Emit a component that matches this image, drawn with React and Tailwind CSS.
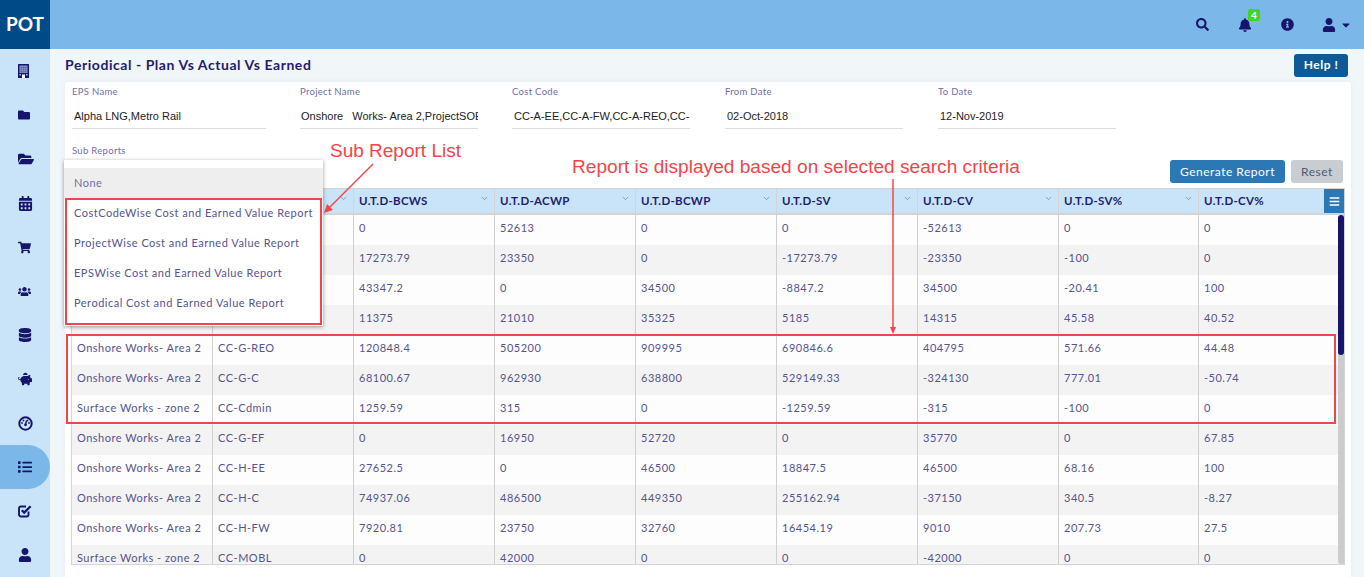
import React from "react";
import {
  FaFolder, FaFolderOpen, FaCalendarAlt, FaShoppingCart, FaUsers, FaDatabase,
  FaPiggyBank, FaList, FaUser, FaSearch, FaBell, FaInfoCircle, FaCaretDown, FaBars,
} from "react-icons/fa";
import { ChevronDown } from "lucide-react";

const BuildingIcon = () => (
  <svg width="11" height="14" viewBox="0 0 11 14">
    <rect width="11" height="14" rx="0.5" fill="#17156b" />
    <rect x="1.5" y="1.5" width="8" height="7.5" fill="#8a9ac8" />
    <path d="M3.5 1.5V9M5.5 1.5V9M7.5 1.5V9M1.5 3.5H9.5M1.5 5.5H9.5M1.5 7.5H9.5" stroke="#55649f" strokeWidth="0.6" />
    <rect x="4" y="10.5" width="3" height="3.5" fill="#ffffff" />
    <rect x="1.5" y="10" width="1.5" height="1.5" fill="#a9c6e8" />
    <rect x="8" y="10" width="1.5" height="1.5" fill="#a9c6e8" />
  </svg>
);

const GaugeIcon = () => (
  <svg width="15" height="15" viewBox="0 0 15 15" fill="none">
    <circle cx="7.5" cy="7.5" r="6.2" stroke="#17156b" strokeWidth="2" />
    <circle cx="4" cy="7" r="0.9" fill="#17156b" />
    <circle cx="5.5" cy="4.5" r="0.9" fill="#17156b" />
    <circle cx="9.5" cy="4.5" r="0.9" fill="#17156b" />
    <circle cx="11" cy="7" r="0.9" fill="#17156b" />
    <path d="M7.5 8.5L8.5 4.5" stroke="#17156b" strokeWidth="1.4" />
    <circle cx="7.5" cy="8.8" r="1.4" fill="#17156b" />
  </svg>
);

const CheckIcon = () => (
  <svg width="14" height="14" viewBox="0 0 14 14" fill="none">
    <path d="M10.5 7.5V10.5C10.5 11.6 9.8 12.5 8.5 12.5H3C1.9 12.5 1 11.6 1 10.5V4.5C1 3.4 1.9 2.5 3 2.5H8" stroke="#17156b" strokeWidth="1.9" />
    <path d="M3.8 6.2L6.2 8.6L12.6 2.2" stroke="#17156b" strokeWidth="2.3" />
  </svg>
);

const NAV = [
  <BuildingIcon />,
  <FaFolder className="w-auto h-[12px]" />,
  <FaFolderOpen className="w-auto h-[16px]" />,
  <FaCalendarAlt className="w-auto h-[15px]" />,
  <FaShoppingCart className="w-auto h-[13px]" />,
  <FaUsers className="w-auto h-[13px]" />,
  <FaDatabase className="w-auto h-[14px]" />,
  <FaPiggyBank className="w-auto h-[14px]" />,
  <GaugeIcon />,
  <FaList className="w-auto h-[14px]" />,
  <CheckIcon />,
  <FaUser className="w-auto h-[14px]" />,
];
const ACTIVE_NAV = 9;

const FIELDS = [
  { label: "EPS Name", value: "Alpha LNG,Metro Rail", box: "w-[194px]", indent: "pl-[2px]" },
  { label: "Project Name", value: <>Onshore  <span className="ml-[3px]">Works- Area 2,ProjectSOE</span></>, box: "w-[178px]", indent: "pl-[1px]" },
  { label: "Cost Code", value: "CC-A-EE,CC-A-FW,CC-A-REO,CC-", box: "w-[178px]", indent: "pl-[2px]" },
  { label: "From Date", value: "02-Oct-2018", box: "w-[178px] ml-[1px]", indent: "pl-[2px]" },
  { label: "To Date", value: "12-Nov-2019", box: "w-[178px] ml-[1px]", indent: "pl-[2px]" },
];

const COLUMNS = ["", "", "U.T.D-BCWS", "U.T.D-ACWP", "U.T.D-BCWP", "U.T.D-SV", "U.T.D-CV", "U.T.D-SV%", "U.T.D-CV%"];

// first two cells of the top rows sit behind the open dropdown
const ROWS = [
  ["", "", "0", "52613", "0", "0", "-52613", "0", "0"],
  ["", "", "17273.79", "23350", "0", "-17273.79", "-23350", "-100", "0"],
  ["", "", "43347.2", "0", "34500", "-8847.2", "34500", "-20.41", "100"],
  ["", "", "11375", "21010", "35325", "5185", "14315", "45.58", "40.52"],
  ["Onshore Works- Area 2", "CC-G-REO", "120848.4", "505200", "909995", "690846.6", "404795", "571.66", "44.48"],
  ["Onshore Works- Area 2", "CC-G-C", "68100.67", "962930", "638800", "529149.33", "-324130", "777.01", "-50.74"],
  ["Surface Works - zone 2", "CC-Cdmin", "1259.59", "315", "0", "-1259.59", "-315", "-100", "0"],
  ["Onshore Works- Area 2", "CC-G-EF", "0", "16950", "52720", "0", "35770", "0", "67.85"],
  ["Onshore Works- Area 2", "CC-H-EE", "27652.5", "0", "46500", "18847.5", "46500", "68.16", "100"],
  ["Onshore Works- Area 2", "CC-H-C", "74937.06", "486500", "449350", "255162.94", "-37150", "340.5", "-8.27"],
  ["Onshore Works- Area 2", "CC-H-FW", "7920.81", "23750", "32760", "16454.19", "9010", "207.73", "27.5"],
  ["Surface Works - zone 2", "CC-MOBL", "0", "42000", "0", "0", "-42000", "0", "0"],
];

const SUB_REPORTS = [
  "CostCodeWise Cost and Earned Value Report",
  "ProjectWise Cost and Earned Value Report",
  "EPSWise Cost and Earned Value Report",
  "Perodical Cost and Earned Value Report",
];

const GRID = "grid grid-cols-[141px_141px_141px_141px_141px_141px_141px_140px_1fr]";

const Sidebar = () => (
  <aside className="w-[50px] shrink-0 bg-[#c9e4f9] flex flex-col">
    {NAV.map((icon, i) => (
      <div key={i} className={`h-[44px] pl-[18px] flex items-center text-[#17156b] ${i === ACTIVE_NAV ? "bg-[#7bb7e8] rounded-r-[22px]" : ""}`}>
        {icon}
      </div>
    ))}
  </aside>
);

const Header = () => (
  <header className="h-[49px] bg-[#7bb7e8] flex items-center shrink-0">
    <div className="w-[50px] h-full bg-[#004b87] flex items-center justify-center text-white font-bold text-[19px]">POT</div>
    <div className="flex-1" />
    <div className="flex items-center text-[#17156b]">
      <FaSearch size={13} className="mr-[29px]" />
      <div className="relative mr-[29px]">
        <FaBell size={14} />
        <span className="absolute -top-[9px] left-[10px] w-[12px] h-[12px] rounded-[2px] bg-[#3fd81e] text-white text-[10px] font-bold leading-[12px] text-center">4</span>
      </div>
      <FaInfoCircle size={13} className="mr-[28px]" />
      <FaUser size={14} className="mr-[4px]" />
      <FaCaretDown size={12} className="mr-[12px]" />
    </div>
  </header>
);

const Field = ({ label, value, box, indent }) => (
  <div className={box}>
    <div className="text-[9.5px] leading-[12px] tracking-[0.3px] text-[#6f6ea8]">{label}</div>
    <div className={`mt-[6px] h-[25px] border-b border-[#dddddd] text-[11px] leading-[24px] text-[#222222] whitespace-pre overflow-hidden font-['Liberation_Sans',sans-serif] ${indent}`}>{value}</div>
  </div>
);

const ReportTable = () => (
  <div className="relative mx-[6px] h-[377px] border-x border-b border-t border-[#d4d4d4] overflow-hidden">
    <div className={`${GRID} h-[26px] bg-[#c9e4f9] border-b-[2px] border-[#d4d4d4]`}>
      {COLUMNS.map((col, i) => (
        <div key={i} className="relative border-r border-[#d4d4d4] pl-[5px] text-[11.5px] font-bold tracking-[0.3px] leading-[24px] text-[#1f1d6e]">
          {col}
          <ChevronDown size={9} strokeWidth={1.6} className="absolute right-[5px] top-[5px] text-[#5b6b9a]" />
        </div>
      ))}
    </div>
    <div className="absolute top-0 right-0 w-[20px] h-[24px] bg-[#2b78b5] flex items-center justify-center text-white">
      <FaBars size={11} />
    </div>
    {ROWS.map((row, r) => (
      <div key={r} className={`${GRID} h-[30px] ${r % 2 ? "bg-[#f3f3f3]" : "bg-[#fdfdfd]"}`}>
        {row.map((cell, c) => (
          <div key={c} className="border-r border-[#cfcfcf] pl-[5px] text-[11px] tracking-[0.5px] leading-[26px] text-[#55548f] whitespace-nowrap">{cell}</div>
        ))}
      </div>
    ))}
    <div className="absolute right-0 top-[26px] bottom-0 w-[6px] bg-[#cccccc] rounded-[3px]">
      <div className="h-[140px] bg-[#17156b] rounded-[3px]" />
    </div>
  </div>
);

const Annotations = () => (
  <>
    <div className="absolute left-[64px] top-[160px] w-[259px] h-[166px] bg-white shadow-[0_1px_4px_rgba(0,0,0,0.4)] pt-[8px] z-10">
      <div className="h-[30px] bg-[#eeeeee] pl-[10px] text-[11px] tracking-[0.5px] leading-[30px] text-[#6f6ea8]">None</div>
      <div className="absolute left-[1px] top-[38px] w-[257px] h-[127px] border-[2px] border-[#f4444a]" />
      {SUB_REPORTS.map((item) => (
        <div key={item} className="h-[30px] pl-[10px] text-[11px] tracking-[0.5px] leading-[30px] text-[#55548f] whitespace-nowrap">{item}</div>
      ))}
    </div>
    <div className="absolute left-[66px] top-[334px] w-[1270px] h-[90px] border-[2px] border-[#f4444a] z-10" />
    <div className="absolute left-[330px] top-[140px] text-[19px] leading-[22px] text-[#f4444a] font-['Liberation_Sans',sans-serif] z-10">Sub Report List</div>
    <div className="absolute left-[572px] top-[156px] text-[19.1px] leading-[22px] text-[#f4444a] font-['Liberation_Sans',sans-serif] z-10">Report is displayed based on selected search criteria</div>
    <svg className="absolute left-0 top-0 z-10 pointer-events-none" width="1364" height="577">
      <line x1="373" y1="164" x2="328" y2="209" stroke="#f4444a" strokeWidth="1.5" />
      <path d="M324 213 L327 204 L333 210 Z" fill="#f4444a" />
      <line x1="893" y1="179" x2="893" y2="329" stroke="#f4444a" strokeWidth="1.5" />
      <path d="M893 334 L890 327 L896 327 Z" fill="#f4444a" />
    </svg>
  </>
);

export default function App() {
  return (
    <div className="relative w-[1364px] h-[577px] overflow-hidden flex flex-col bg-[#f1f6f9] font-['Lato',sans-serif]">
      <Header />
      <div className="flex flex-1 min-h-0">
        <Sidebar />
        <main className="flex-1 min-w-0 pl-[15px] pr-[13px]">
          <div className="h-[33px] flex items-center justify-between">
            <h1 className="text-[14px] font-bold tracking-[0.55px] text-[#1f1d6e] -mt-[2px]">Periodical - Plan Vs Actual Vs Earned</h1>
            <button className="w-[54px] h-[23px] -mt-[1px] mr-[3px] rounded-[3px] bg-[#0f5a96] text-white text-[12px] font-bold tracking-[0.5px]">Help !</button>
          </div>
          <section className="bg-white rounded-t-[4px] h-[500px] shadow-[0_0_6px_rgba(0,0,0,0.04)] pt-[4px] w-[1286px]">
            <div className="flex gap-[34px] pl-[7px]">
              {FIELDS.map((f) => <Field key={f.label} {...f} />)}
            </div>
            <div className="flex justify-between mt-[16px] pl-[7px] pr-[8px] h-[43px]">
              <div className="text-[9.5px] leading-[12px] tracking-[0.3px] text-[#6f6ea8]">Sub Reports</div>
              <div className="flex gap-[6px] mt-[15px] h-[23px]">
                <button className="w-[115px] rounded-[3px] bg-[#2b78b5] text-white text-[12px] tracking-[0.5px]">Generate Report</button>
                <button className="w-[52px] rounded-[3px] bg-[#c9ccd1] text-[#4f5b75] text-[12px] tracking-[0.5px]">Reset</button>
              </div>
            </div>
            <ReportTable />
          </section>
        </main>
      </div>
      <Annotations />
    </div>
  );
}
